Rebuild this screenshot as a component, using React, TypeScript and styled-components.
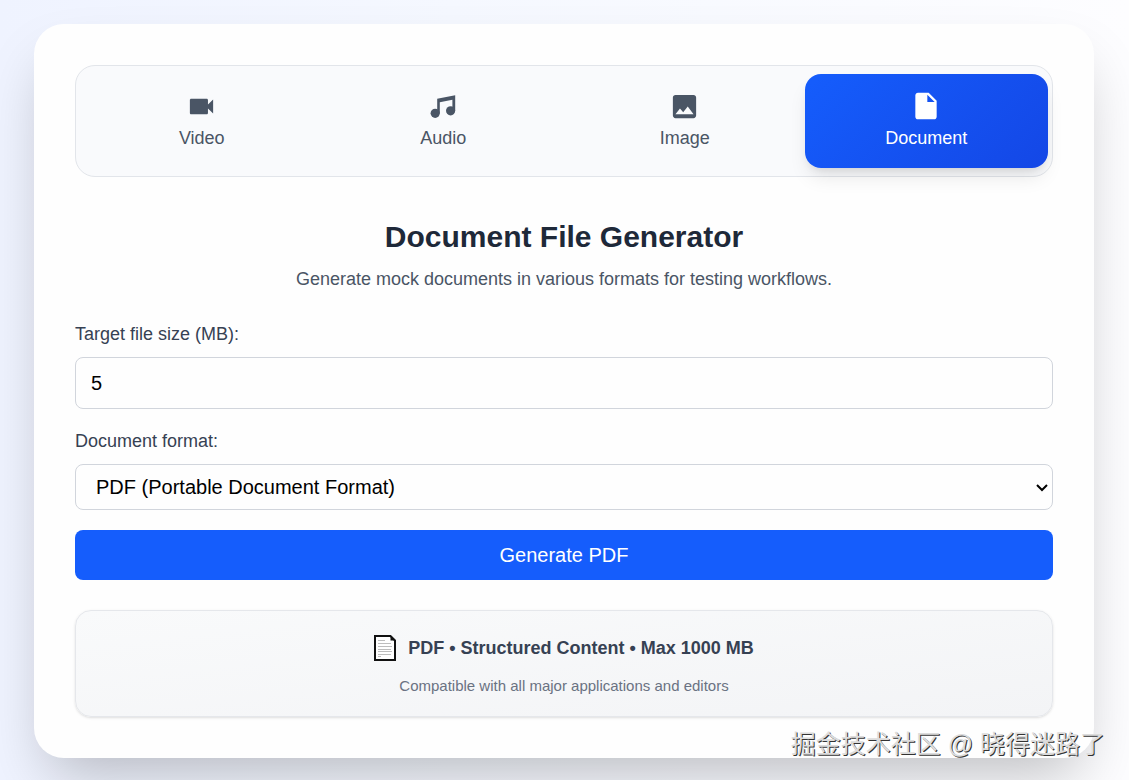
import React from "react";
import styled, { createGlobalStyle, css } from "styled-components";
import { MdVideocam, MdImage, MdInsertDriveFile } from "react-icons/md";

const GlobalStyle = createGlobalStyle`
  *, *::before, *::after { box-sizing: border-box; }
  body {
    margin: 0;
    font-family: "Liberation Sans", Arial, "Noto Sans CJK SC", sans-serif;
    color: #1e2939;
  }
  button, input, select { font: inherit; }
`;

const Page = styled.main`
  min-height: 100vh;
  padding: 24px 35px 22px 34px;
  background: linear-gradient(90deg, #eff3ff 0%, #f5f8ff 40%, #fdfdff 100%);
`;

const Card = styled.section`
  padding: 41px;
  border-radius: 30px;
  background: #fefefe;
  box-shadow: 0 30px 60px -15px rgba(0, 0, 0, 0.25);
`;

const Tabs = styled.nav`
  display: grid;
  grid-template-columns: repeat(4, 1fr);
  gap: 2px;
  padding: 8px 6px;
  border: 1px solid #e2e5ea;
  border-radius: 20px;
  background: #f9fafc;
`;

const Tab = styled.button<{ $active?: boolean }>`
  display: flex;
  flex-direction: column;
  align-items: center;
  justify-content: center;
  gap: 4px;
  height: 94px;
  margin: ${(p) => (p.$active ? "0 -2px" : "0")};
  padding: 0 0 2px;
  border: 0;
  border-radius: 16px;
  font-size: 18px;
  line-height: 24px;
  cursor: pointer;
  color: ${(p) => (p.$active ? "#ffffff" : "#4a5565")};
  background: ${(p) =>
    p.$active ? "linear-gradient(135deg, #155dfc, #1447e6)" : "transparent"};
  box-shadow: ${(p) =>
    p.$active
      ? "0 12px 20px -4px rgba(0, 0, 0, 0.1), 0 5px 8px -4px rgba(0, 0, 0, 0.1)"
      : "none"};

  svg { display: block; }
`;

const Heading = styled.header`
  margin-top: 40px;
  text-align: center;
`;

const Title = styled.h1`
  margin: 0;
  font-size: 30px;
  line-height: 40px;
  font-weight: 700;
`;

const Subtitle = styled.p`
  margin: 8px 0 0;
  font-size: 18px;
  line-height: 28px;
  color: #4a5565;
`;

const Form = styled.form`
  display: flex;
  flex-direction: column;
  gap: 20px;
  margin-top: 29px;
`;

const Field = styled.div`
  display: flex;
  flex-direction: column;
  gap: 10px;
`;

const Label = styled.label`
  font-size: 18px;
  line-height: 25px;
  color: #364153;
`;

const control = css`
  width: 100%;
  margin: 0;
  border: 1px solid #d1d5dc;
  border-radius: 8px;
  background: transparent;
  color: #000000;
  font-size: 20px;
`;

const NumberInput = styled.input`
  ${control}
  height: 52px;
  padding: 0 15px;
`;

const SelectBox = styled.div`
  display: grid;
  align-items: center;

  > * { grid-area: 1 / 1; }
  > svg {
    justify-self: end;
    margin-right: 4px;
    pointer-events: none;
  }
`;

const FormatSelect = styled.select`
  ${control}
  appearance: none;
  height: 46px;
  padding: 0 20px;
`;

const Submit = styled.button`
  height: 50px;
  border: 0;
  border-radius: 8px;
  background: #155dfc;
  color: #ffffff;
  font-size: 20px;
  cursor: pointer;
`;

const Summary = styled.aside`
  display: flex;
  flex-direction: column;
  align-items: center;
  gap: 12px;
  margin-top: 30px;
  padding: 22px 20px 19px;
  border: 1px solid #e5e7eb;
  border-radius: 16px;
  background: linear-gradient(to bottom right, #f9fafb, #f3f4f6);
  box-shadow: 0 1px 3px rgba(0, 0, 0, 0.1), 0 1px 2px -1px rgba(0, 0, 0, 0.1);
`;

const SummaryTitle = styled.p`
  display: flex;
  align-items: center;
  gap: 12px;
  margin: 0;
  font-size: 18px;
  line-height: 30px;
  font-weight: 700;
  color: #364153;
`;

const SummaryNote = styled.p`
  margin: 0;
  font-size: 15px;
  line-height: 22px;
  color: #6a7282;
`;

const Watermark = styled.p`
  position: absolute;
  right: 24px;
  bottom: 18px;
  margin: 0;
  font-size: 25px;
  line-height: 36px;
  color: #dcdcdc;
  text-shadow: 1px 1px 0 #333333;
`;

const MusicIcon = () => (
  <svg width="31" height="31" viewBox="0 0 31 31" fill="currentColor" aria-hidden="true">
    <path d="M9.200 7.800 27.200 4.200V19.800H24.400V8.700L11.800 11.300V22.300H9.200z" />
    <circle cx="7.200" cy="22.300" r="4.600" />
    <circle cx="22.600" cy="19.800" r="4.600" />
  </svg>
);

const PageIcon = () => (
  <svg width="22" height="26" viewBox="0 0 22 26" aria-hidden="true">
    <path d="M1 1H16.500L21 5.500V25H1z" fill="#fff" stroke="#111" strokeWidth="2" />
    <path d="M16.500 1V5.500H21z" fill="#111" />
    <path
      d="M4 5.500h7M4 8.500h13M4 11.500h14M4 14.500h13M4 16.500h14M4 19.500h13M4 21.500h3"
      stroke="#bdbdbd"
    />
  </svg>
);

const ChevronIcon = () => (
  <svg width="14" height="14" viewBox="0 0 14 14" fill="none" aria-hidden="true">
    <path d="M2 5 7 10 12 5" stroke="#000" strokeWidth="2" />
  </svg>
);

const tabs = [
  { name: "Video", icon: <MdVideocam size={31} /> },
  { name: "Audio", icon: <MusicIcon /> },
  { name: "Image", icon: <MdImage size={31} /> },
  { name: "Document", icon: <MdInsertDriveFile size={32} />, active: true },
];

export default function App() {
  return (
    <>
      <GlobalStyle />
      <Page>
        <Card>
          <Tabs>
            {tabs.map((t) => (
              <Tab key={t.name} type="button" $active={t.active}>
                {t.icon}
                <span>{t.name}</span>
              </Tab>
            ))}
          </Tabs>
          <Heading>
            <Title>Document File Generator</Title>
            <Subtitle>Generate mock documents in various formats for testing workflows.</Subtitle>
          </Heading>
          <Form>
            <Field>
              <Label htmlFor="size">Target file size (MB):</Label>
              <NumberInput id="size" type="text" inputMode="numeric" defaultValue="5" />
            </Field>
            <Field>
              <Label htmlFor="format">Document format:</Label>
              <SelectBox>
                <FormatSelect id="format" defaultValue="pdf">
                  <option value="pdf">PDF (Portable Document Format)</option>
                </FormatSelect>
                <ChevronIcon />
              </SelectBox>
            </Field>
            <Submit type="button">Generate PDF</Submit>
          </Form>
          <Summary>
            <SummaryTitle>
              <PageIcon />
              <span>PDF • Structured Content • Max 1000 MB</span>
            </SummaryTitle>
            <SummaryNote>Compatible with all major applications and editors</SummaryNote>
          </Summary>
        </Card>
      </Page>
      <Watermark>掘金技术社区 @ 晓得迷路了</Watermark>
    </>
  );
}
